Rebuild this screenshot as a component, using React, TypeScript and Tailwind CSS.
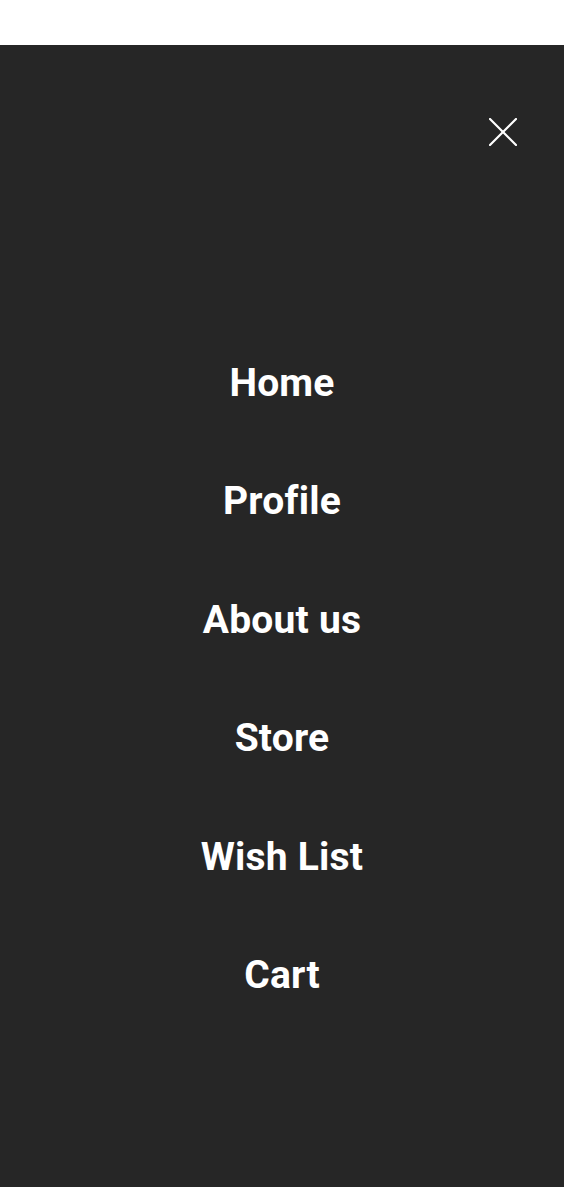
const LINKS = ["Home", "Profile", "About us", "Store", "Wish List", "Cart"];

function CloseIcon() {
  return (
    <svg width="28" height="28" viewBox="0 0 28 28" fill="none" stroke="white" strokeWidth="2.2" strokeLinecap="round">
      <path d="M1 1L27 27" />
      <path d="M27 1L1 27" />
    </svg>
  );
}

export default function App() {
  return (
    <div className="flex min-h-[1187px] flex-col bg-white" style={{ fontFamily: "Roboto, 'Liberation Sans', sans-serif" }}>
      <div className="h-[45px] bg-white" />
      <div className="flex flex-1 flex-col bg-[#262626]">
        <div className="flex justify-end pr-[47px] pt-[73px]">
          <button type="button" aria-label="Close menu" className="block">
            <CloseIcon />
          </button>
        </div>
        <nav className="mt-[178px] flex flex-col">
          {LINKS.map((l) => (
            <a
              key={l}
              href="#"
              className="flex h-[118.4px] items-center justify-center text-[39px] font-bold tracking-[0.2px] text-white"
            >
              {l}
            </a>
          ))}
        </nav>
      </div>
    </div>
  );
}
